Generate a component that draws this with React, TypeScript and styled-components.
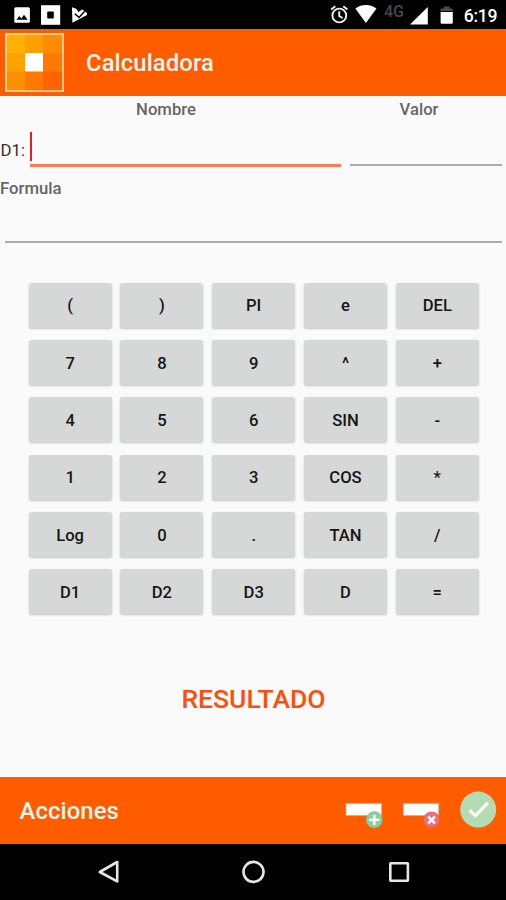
import React from "react";
import styled, { createGlobalStyle } from "styled-components";

const ORANGE = "#ff5c00";

const GlobalStyle = createGlobalStyle`
  * { box-sizing: border-box; }
  body { margin: 0; background: #fafafa; }
`;

const Screen = styled.div`
  display: flex;
  flex-direction: column;
  width: 506px;
  height: 900px;
  overflow: hidden;
  background: #fafafa;
  font-family: Roboto, "Liberation Sans", sans-serif;
  font-weight: 500;
`;

const StatusBar = styled.div`
  flex: none;
  display: flex;
  justify-content: space-between;
  height: 28.6px;
  background: #000;
`;

const StatusIcons = styled.svg`
  display: block;
  height: 28px;
`;

const StatusRight = styled.div`
  display: flex;
  padding-right: 8px;
`;

const Clock = styled.span`
  width: 35px;
  font-size: 17.6px;
  line-height: 32px;
  letter-spacing: -0.3px;
  color: #fff;
  text-align: center;
  white-space: nowrap;
`;

const AppBar = styled.header`
  flex: none;
  display: flex;
  align-items: center;
  gap: 22px;
  height: 67px;
  padding-left: 5px;
  background: ${ORANGE};
`;

const Logo = styled.svg`
  width: 59px;
  height: 59px;
`;

const BarTitle = styled.h1`
  margin: 0;
  padding-top: 2px;
  font-size: 23.8px;
  font-weight: 500;
  line-height: 30px;
  letter-spacing: 0.12px;
  color: #fff5ee;
`;

const Form = styled.section`
  flex: none;
  display: flex;
  flex-direction: column;
  height: 187px;
`;

const LabelRow = styled.div`
  display: grid;
  grid-template-columns: 332px 174px;
  height: 28px;
  justify-items: center;
`;

const FieldLabel = styled.label`
  font-size: 16.7px;
  line-height: 27px;
  color: #666;
`;

const FieldRow = styled.div`
  display: flex;
  align-items: flex-start;
  height: 51px;
`;

const Prefix = styled.span`
  width: 30px;
  padding-left: 0.6px;
  font-size: 16.8px;
  font-weight: 400;
  line-height: 52px;
  color: #333;
`;

const Field = styled.div<{ $width: number; $active?: boolean; $height: number }>`
  display: flex;
  align-items: flex-start;
  width: ${(p) => p.$width}px;
  height: ${(p) => p.$height}px;
  padding-top: 8px;
  border-bottom: ${(p) => (p.$active ? "3px solid #ff7d55" : "2px solid #acacac")};
`;

const Caret = styled.span`
  width: 2px;
  height: 29px;
  background: #ee1c24;
`;

const ValueSlot = styled.div`
  padding-left: 9px;
`;

const FormulaSlot = styled.div`
  padding-left: 5px;
`;

const Keypad = styled.div`
  flex: none;
  display: grid;
  grid-template-columns: repeat(5, 83px);
  grid-auto-rows: 45px;
  column-gap: 8.8px;
  row-gap: 12.3px;
  padding: 0.3px 0 0 28.6px;
`;

const Key = styled.button`
  display: flex;
  align-items: center;
  justify-content: center;
  padding: 2px 0 0;
  border: 0;
  border-radius: 2.5px;
  background: #d6d8d7;
  box-shadow: 0 1px 2px rgba(0, 0, 0, 0.22);
  font: 500 16.6px/20px Roboto, "Liberation Sans", sans-serif;
  color: #151515;
`;

const Result = styled.div`
  flex: 1;
  display: flex;
  align-items: center;
  justify-content: center;
  padding: 7px 0 0 1px;
  font-size: 26.5px;
  line-height: 32px;
  color: #ff4d0a;
`;

const ActionBar = styled.footer`
  flex: none;
  display: flex;
  align-items: center;
  justify-content: space-between;
  height: 67px;
  padding-left: 19.5px;
  background: ${ORANGE};
`;

const ActionIcons = styled.svg`
  width: 166px;
  height: 67px;
`;

const NavBar = styled.nav`
  flex: none;
  height: 56.5px;
  background: #000;
`;

const KEYS = [
  "(", ")", "PI", "e", "DEL",
  "7", "8", "9", "^", "+",
  "4", "5", "6", "SIN", "-",
  "1", "2", "3", "COS", "*",
  "Log", "0", ".", "TAN", "/",
  "D1", "D2", "D3", "D", "=",
];

const TILES = [
  "#ffb000", "#ff9f00", "#ff8c00",
  "#ffa200", "#ffffff", "#ff7900",
  "#ff8f00", "#ff7900", "#ff6200",
];

function NotificationIcons() {
  return (
    <StatusIcons width="100" viewBox="0 0 100 28">
      <rect x="14.3" y="7.2" width="15.6" height="15.6" rx="1.6" fill="#fff" />
      <path d="M16.5 19.8l2.8-3.8 2 2.4 2.7-3.6 3.7 5z" fill="#000" />
      <path d="M41 5.2h19.2v19.6H41z" fill="#fff" />
      <rect x="47.2" y="11.6" width="6.6" height="6.8" rx="1" fill="#000" />
      <path d="M72 7.3l4.2 1.4 2.2 3.4 4-2.6 4.6 3.6v2L72.4 22.8z" fill="#fff" />
      <path d="M74.8 13.8l4.2 3.6 5.7-6.2" fill="none" stroke="#000" strokeWidth="1.5" />
      <path d="M78 6.5l1.3 4 3-2z" fill="#000" />
    </StatusIcons>
  );
}

function SystemIcons() {
  return (
    <StatusIcons width="135" viewBox="328 0 135 28">
      <g fill="none" stroke="#eee" strokeWidth="1.9">
        <circle cx="339.3" cy="15.5" r="6.9" />
        <path d="M339.2 11.2v4.8l3.4 2" />
        <path d="M331.2 9.6l4.1-3.4M347.4 9.6l-4.1-3.4" />
      </g>
      <path d="M355.3 8.5c6.5-4.6 14.7-4.6 21.2 0L365.9 23z" fill="#fff" />
      <text x="384" y="16.5" fill="#484848" fontFamily="Roboto, sans-serif" fontWeight="500" fontSize="16">4G</text>
      <path d="M427.8 7v17.6H410z" fill="#fff" />
      <path d="M440.6 12h12.2v10.6a1.2 1.2 0 0 1-1.2 1.2h-9.8a1.2 1.2 0 0 1-1.2-1.2z" fill="#fff" />
      <path d="M440.6 11V9.5a1 1 0 0 1 1-1h2.2V6.6h5.8v1.9h2.2a1 1 0 0 1 1 1V11z" fill="#4c4c4c" />
    </StatusIcons>
  );
}

function AppLogo() {
  return (
    <Logo viewBox="0 0 59 59">
      {TILES.map((color, i) => (
        <rect
          key={i}
          x={[1, 20, 38][i % 3]}
          y={[1, 20, 38.5][Math.floor(i / 3)]}
          width={i % 3 === 1 ? 18.5 : 20}
          height={Math.floor(i / 3) === 1 ? 19 : 20}
          fill={color}
        />
      ))}
      <rect x="0.9" y="0.9" width="57.2" height="57.2" fill="none" stroke="#ffdcae" strokeWidth="1.7" />
    </Logo>
  );
}

function Actions() {
  return (
    <ActionIcons viewBox="340 777 166 67">
      <g stroke="#cdaaa5" strokeWidth="0.8" fill="#fff">
        <path d="M346 803.4h35.6v12.2H346zM403.3 803.4h35.4v12.2h-35.4z" />
      </g>
      <circle cx="374.3" cy="819.9" r="8.1" fill="#8fcf9f" stroke="#74b185" strokeWidth="0.8" />
      <path d="M374.3 814.8v10.2M369.2 819.9h10.2" stroke="#fff" strokeWidth="2.4" />
      <circle cx="431.6" cy="819.9" r="7.9" fill="#f06f76" stroke="#d5595f" strokeWidth="0.8" />
      <path d="M428.2 816.5l6.8 6.8M435 816.5l-6.8 6.8" stroke="#fff" strokeWidth="2.5" />
      <circle cx="478.2" cy="809.6" r="18" fill="#b3dcb6" />
      <path d="M469.5 810l6 5.7 12.5-13" fill="none" stroke="#fff9ec" strokeWidth="3.2" />
    </ActionIcons>
  );
}

function NavIcons() {
  return (
    <svg width="506" height="56" viewBox="0 844 506 56" fill="none" stroke="#e6e6e6" strokeWidth="2.6" strokeLinejoin="round">
      <path d="M117.2 862v19.4L99.8 872z" />
      <circle cx="253.5" cy="871.9" r="10" />
      <rect x="390.3" y="863.2" width="17.6" height="17.6" rx="0.5" />
    </svg>
  );
}

export default function App() {
  return (
    <Screen>
      <GlobalStyle />
      <StatusBar>
        <NotificationIcons />
        <StatusRight>
          <SystemIcons />
          <Clock>6:19</Clock>
        </StatusRight>
      </StatusBar>
      <AppBar>
        <AppLogo />
        <BarTitle>Calculadora</BarTitle>
      </AppBar>
      <Form>
        <LabelRow>
          <FieldLabel>Nombre</FieldLabel>
          <FieldLabel>Valor</FieldLabel>
        </LabelRow>
        <FieldRow>
          <Prefix>D1:</Prefix>
          <Field $width={311} $height={43} $active>
            <Caret />
          </Field>
          <ValueSlot>
            <Field $width={152} $height={42} />
          </ValueSlot>
        </FieldRow>
        <FieldLabel>Formula</FieldLabel>
        <FormulaSlot>
          <Field $width={497} $height={41} />
        </FormulaSlot>
      </Form>
      <Keypad>
        {KEYS.map((label) => (
          <Key key={label}>{label}</Key>
        ))}
      </Keypad>
      <Result>RESULTADO</Result>
      <ActionBar>
        <BarTitle>Acciones</BarTitle>
        <Actions />
      </ActionBar>
      <NavBar>
        <NavIcons />
      </NavBar>
    </Screen>
  );
}
